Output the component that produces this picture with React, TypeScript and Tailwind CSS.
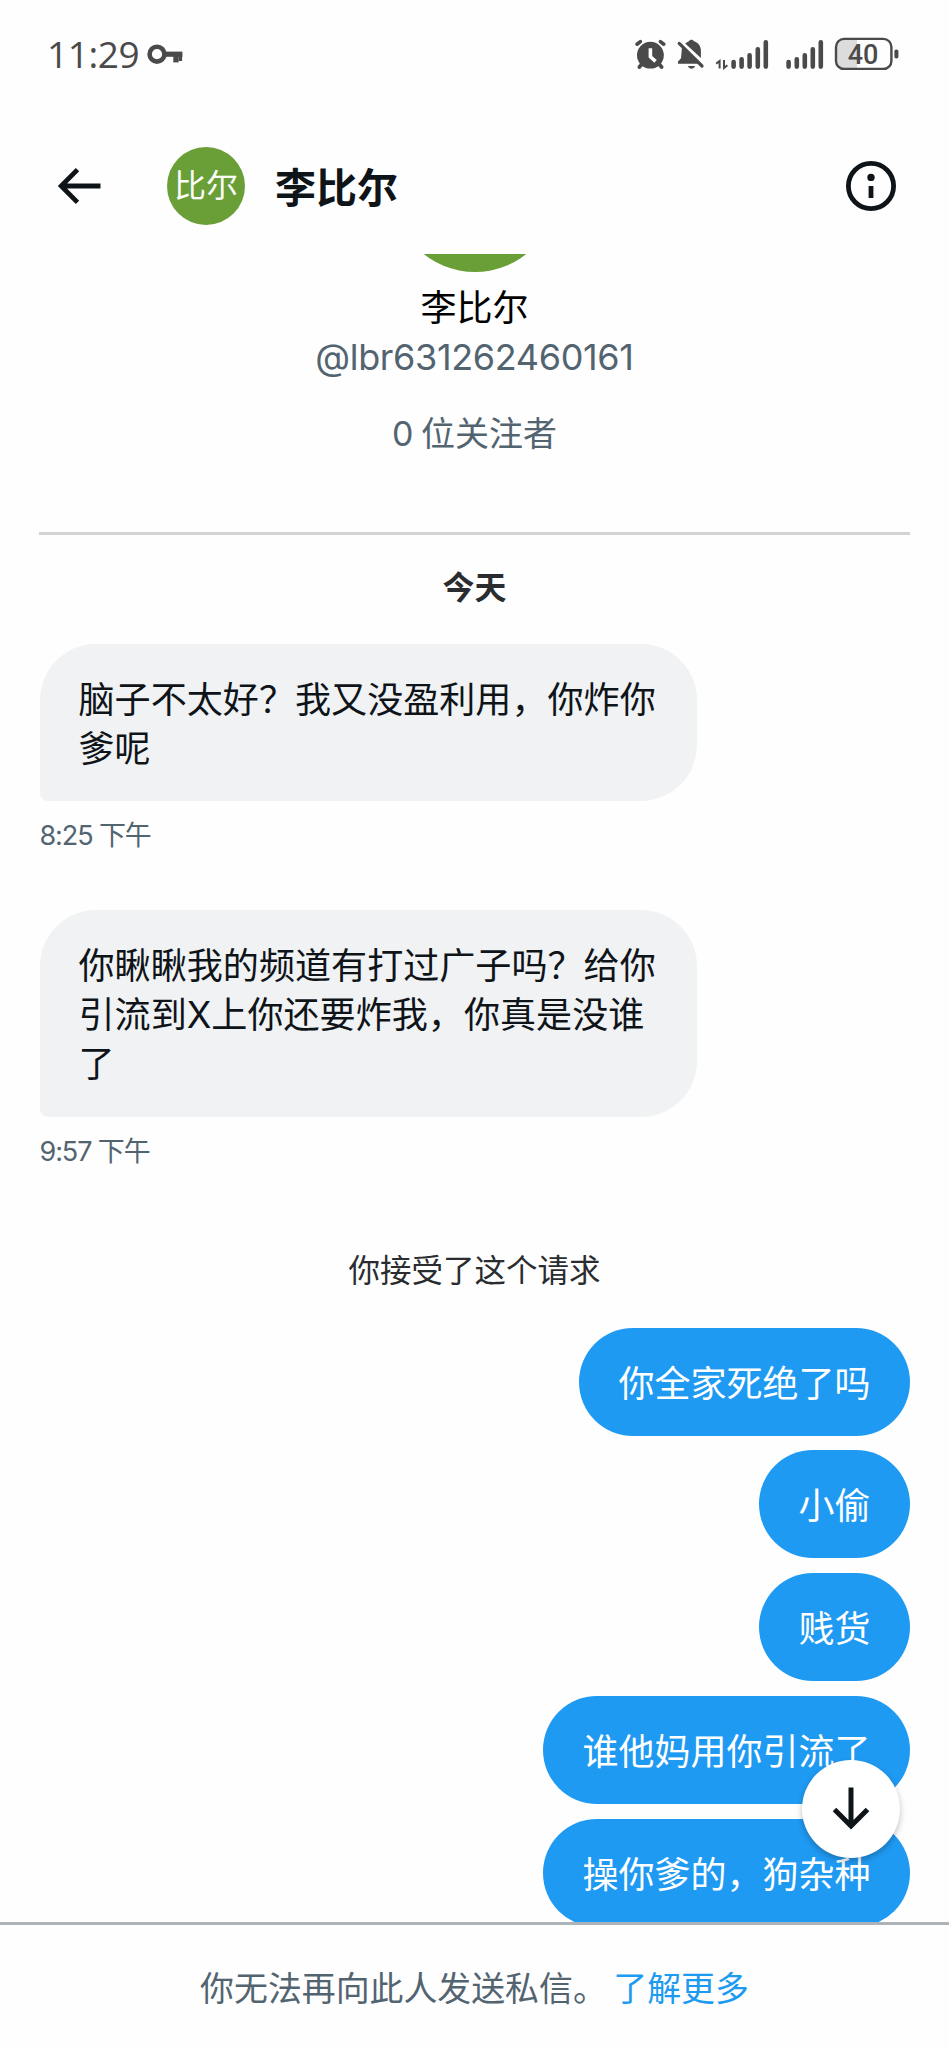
import React from 'react';

interface Message {
  id: number;
  text: string;
  time?: string;
}

const received: Message[] = [
  { id: 1, text: '脑子不太好？我又没盈利用，你炸你爹呢', time: '8:25 下午' },
  { id: 2, text: '你瞅瞅我的频道有打过广子吗？给你引流到X上你还要炸我，你真是没谁了', time: '9:57 下午' },
];

const sent: Message[] = [
  { id: 3, text: '你全家死绝了吗' },
  { id: 4, text: '小偷' },
  { id: 5, text: '贱货' },
  { id: 6, text: '谁他妈用你引流了' },
  { id: 7, text: '操你爹的，狗杂种' },
];

const StatusIcons: React.FC = () => (
  <svg width="266" height="36" viewBox="634 36 266 36" fill="#4a4a4a">
    {/* alarm */}
    <g stroke="#4a4a4a" strokeLinecap="round">
      <circle cx="650.4" cy="55.2" r="13.4" stroke="none" />
      <path d="M637 44.2L640.4 41.6M663.8 44.2L660.4 41.6" strokeWidth="3.6" />
      <path d="M642 64l-2.6 3M659 64l2.6 3" strokeWidth="3.8" />
      <path d="M650.4 48.2v8.6l5.2 4.6" stroke="#fff" strokeWidth="3.6" strokeLinecap="butt" fill="none" />
    </g>
    {/* muted bell */}
    <path d="M685.2 43.6c1.2-1.2 2.4-2 3.7-2.4 1.2-2 3.9-2 5.1 0 4.2 1.3 6.9 4.9 6.9 9.4v7.4z" />
    <path d="M682 47.2l16.6 16.6H678v-2.2l3-3.4z" />
    <path d="M688 66h7c-1 3.6-6 3.6-7 0z" />
    <path d="M679.2 43.4L702 66" stroke="#4a4a4a" strokeWidth="3.2" strokeLinecap="round" />
    {/* data arrows */}
    <path d="M719.6 68.6V61l-3.4 2.6M724 60v8l3.4-2.8" stroke="#4a4a4a" strokeWidth="2" fill="none" />
    {/* signals */}
    <g stroke="#4a4a4a" strokeWidth="4.6" strokeLinecap="round">
      <path d="M733.6 62v4.6M741.6 59.2v7.4M749.6 55.2v11.4M757.8 49.2v17.4M765.8 42.2v24.4" />
      <path d="M788.6 62v4.6M796.8 59.2v7.4M804.8 55.2v11.4M812.8 49.2v17.4M820.8 42.2v24.4" />
    </g>
    {/* battery */}
    <path d="M844 39h13v30h-13a8 8 0 0 1-8-8V47a8 8 0 0 1 8-8z" fill="#dcdcdc" />
    <rect x="836" y="38.9" width="55.4" height="30" rx="8" fill="none" stroke="#4a4a4a" strokeWidth="2.4" />
    <rect x="894.4" y="49.5" width="4" height="9" rx="1.8" />
    <text x="863" y="64" textAnchor="middle" fontSize="27" fontWeight="500" className="font-['Roboto',sans-serif]">40</text>
  </svg>
);

const StatusBar: React.FC = () => (
  <div className="flex h-[110px] shrink-0 items-start justify-between pl-[47px] pr-[49px] pt-9 text-[#4a4a4a]">
    <div className="flex h-9 items-center">
      <span className="w-[93px] whitespace-nowrap font-['Open_Sans',sans-serif] text-[37px] font-medium leading-9 tracking-[-0.4px]">11:29</span>
      <svg width="44" height="36" viewBox="140 36 44 36" fill="none" stroke="#4a4a4a">
        <circle cx="157" cy="54.2" r="7.4" strokeWidth="4.6" />
        <path d="M165 54.2h17.4" strokeWidth="5.2" />
        <path d="M176 54v8.4" strokeWidth="5.4" />
        <path d="M180.4 54v7" strokeWidth="3.4" />
      </svg>
    </div>
    <StatusIcons />
  </div>
);

const Header: React.FC = () => (
  <header className="flex h-[144px] shrink-0 items-center pl-[56px] pr-[52px] pt-[8px]">
    <button className="mr-[63px]">
      <svg className="block" width="48" height="40" viewBox="0 0 48 40" fill="none" stroke="#0f1419" strokeWidth="4.8">
        <path d="M44.5 20H5M21.5 3.6L5.2 20l16.3 16.4" />
      </svg>
    </button>
    <div className="flex h-[78px] w-[78px] items-center justify-center rounded-full bg-[#6a9f38] text-[32px] leading-none text-[#fbfdf8]">比尔</div>
    <h1 className="ml-[30px] mt-[5px] flex-1 text-[41px] font-bold leading-none text-[#0f1419]">李比尔</h1>
    <button>
      <svg className="block" width="52" height="52" viewBox="0 0 52 52" fill="#0f1419">
        <circle cx="26" cy="26" r="22.6" fill="none" stroke="#0f1419" strokeWidth="4.8" />
        <circle cx="26" cy="17.4" r="3.7" />
        <path d="M23.6 26h4.8v12h-4.8z" />
      </svg>
    </button>
  </header>
);

const ProfileCard: React.FC = () => (
  <section className="mx-[39px] flex h-[281px] flex-col items-center border-b-[3px] border-[#d2d4d5]">
    <div className="flex h-[18px] w-[164px] flex-col justify-end overflow-hidden">
      <div className="h-[164px] w-[164px] shrink-0 rounded-full bg-[#6a9f38]" />
    </div>
    <div className="mt-[11px] text-[36px] leading-[50px] text-black">李比尔</div>
    <div className="-mt-px text-[36px] leading-[50px] tracking-[-0.35px] text-[#536471]">@lbr631262460161</div>
    <div className="mt-[27px] text-[34px] leading-[50px] text-[#536471] [word-spacing:-2px]">0 位关注者</div>
  </section>
);

const ReceivedMessage: React.FC<{ message: Message }> = ({ message }) => (
  <div className="mb-[48px]">
    <div className="w-[657px] rounded-[56px] rounded-bl-[8px] bg-[#f0f2f4] px-[39px] pb-[28px] pt-[32px] text-[36.1px] leading-[48.7px] text-[#0f1419]">
      {message.text}
    </div>
    <div className="mt-[12px] h-[49px] text-[27px] leading-[46px] tracking-[-1.1px] text-[#536471]">{message.time}</div>
  </div>
);

const SentMessage: React.FC<{ message: Message }> = ({ message }) => (
  <div className="h-[108px] shrink-0 rounded-[54px] bg-[#1f9af3] px-[39.5px] pt-[4px] text-[36px] leading-[104px] text-white">
    {message.text}
  </div>
);

export default function App() {
  return (
    <div className="flex h-[2048px] w-[949px] flex-col overflow-hidden bg-[#fefefe] font-['Inter','Noto_Sans_CJK_SC',sans-serif]">
      <StatusBar />
      <Header />
      <main className="relative h-[1668px] shrink-0 overflow-hidden">
        <ProfileCard />
        <div className="mb-[31px] pt-[27px] text-center text-[32px] font-bold leading-[51px] text-[#2a2c2f]">今天</div>
        <div className="px-[39.5px]">
          {received.map(m => (
            <ReceivedMessage key={m.id} message={m} />
          ))}
        </div>
        <div className="pt-[20px] text-center text-[31.5px] leading-[50px] text-[#2a2c2f]">你接受了这个请求</div>
        <div className="mt-[32px] flex flex-col items-end gap-[14.8px] pr-[39px]">
          {sent.map(m => (
            <SentMessage key={m.id} message={m} />
          ))}
        </div>
        <button className="absolute bottom-[64px] right-[49px] flex h-[98px] w-[98px] items-center justify-center rounded-full bg-white shadow-[0_3px_6px_rgba(0,0,0,0.25)]">
          <svg width="40" height="48" viewBox="0 0 40 48" fill="none" stroke="#0f1419" strokeWidth="5">
            <path d="M20 2.5v39M3.5 24.5L20 41l16.5-16.500" />
          </svg>
        </button>
      </main>
      <footer className="flex-1 border-t-[3px] border-[#acb4b9] pt-[39px] text-center text-[33.9px] leading-[50px] text-[#536471] [word-spacing:-3px]">
        你无法再向此人发送私信。 <a className="text-[#1d9bf0]">了解更多</a>
      </footer>
    </div>
  );
}
